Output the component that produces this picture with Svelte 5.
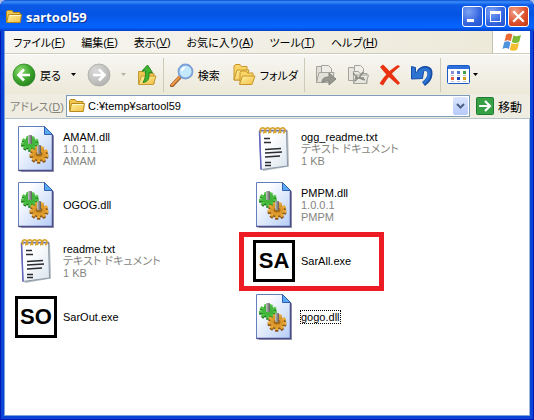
<script>
  const menus = [
    { label: 'ファイル', key: 'F' },
    { label: '編集', key: 'E' },
    { label: '表示', key: 'V' },
    { label: 'お気に入り', key: 'A' },
    { label: 'ツール', key: 'T' },
    { label: 'ヘルプ', key: 'H' }
  ]

  const files = [
    { name: 'AMAM.dll', type: 'dll', info: ['1.0.1.1', 'AMAM'] },
    { name: 'ogg_readme.txt', type: 'txt', info: ['テキスト ドキュメント', '1 KB'] },
    { name: 'OGOG.dll', type: 'dll', info: [] },
    { name: 'PMPM.dll', type: 'dll', info: ['1.0.0.1', 'PMPM'] },
    { name: 'readme.txt', type: 'txt', info: ['テキスト ドキュメント', '1 KB'] },
    { name: 'SarAll.exe', type: 'exe', badge: 'SA', info: [], marked: true },
    { name: 'SarOut.exe', type: 'exe', badge: 'SO', info: [] },
    { name: 'gogo.dll', type: 'dll', info: [], focused: true }
  ]

  let path = 'C:¥temp¥sartool59'
</script>

{#snippet folder(size)}
  <svg width={size} height={size} viewBox="0 0 16 16">
    <path d="M.5 13V2.500L1.500 1.500H6l1.500 2H14v3" fill="#f3c64e" stroke="#b88a1c" />
    <path d="M.8 13.500L2.500 5.500h13l-1.200 8z" fill="url(#gFolder)" stroke="#b88a1c" />
    <path d="M3.500 6.500h11" stroke="#fff8c8" />
  </svg>
{/snippet}

{#snippet caret()}
  <svg class="caret" width="5" height="3" viewBox="0 0 5 3"><path d="M0 0h5L2.500 3z" fill="currentColor" /></svg>
{/snippet}

<svg class="defs" width="0" height="0" aria-hidden="true">
  <defs>
    <linearGradient id="gFolder" x1="0" y1="0" x2="1" y2="1">
      <stop offset="0" stop-color="#fff3a0" /><stop offset="1" stop-color="#f2bd45" />
    </linearGradient>
    <radialGradient id="gGreen" cx=".35" cy=".3" r=".8">
      <stop offset="0" stop-color="#8fdc70" /><stop offset=".55" stop-color="#3ea72e" /><stop offset="1" stop-color="#237c1a" />
    </radialGradient>
    <radialGradient id="gGrey" cx=".35" cy=".3" r=".8">
      <stop offset="0" stop-color="#dadada" /><stop offset="1" stop-color="#b0b0ae" />
    </radialGradient>
    <linearGradient id="gPage" x1="0" y1="0" x2="1" y2="1">
      <stop offset=".2" stop-color="#ffffff" /><stop offset="1" stop-color="#b4ccf8" />
    </linearGradient>
    <linearGradient id="gNote" x1="0" y1="0" x2="1" y2="1">
      <stop offset=".3" stop-color="#ffffff" /><stop offset="1" stop-color="#d9e4ee" />
    </linearGradient>
    <linearGradient id="gPin" x1="0" y1="0" x2="1" y2="0">
      <stop offset="0" stop-color="#c4c4c4" /><stop offset="1" stop-color="#5c5c5c" />
    </linearGradient>
  </defs>
</svg>

<div class="window">
  <header class="titlebar">
    {@render folder(16)}
    <h1>sartool59</h1>
    <div class="controls">
      <button class="ctl" aria-label="最小化">
        <svg width="19" height="19" viewBox="0 0 19 19"><path d="M4 12h7v3H4z" fill="#fff" /></svg>
      </button>
      <button class="ctl" aria-label="最大化">
        <svg width="19" height="19" viewBox="0 0 19 19"><path d="M4 4h11v11H4zM5 7v7h9V7z" fill="#fff" fill-rule="evenodd" /></svg>
      </button>
      <button class="ctl close" aria-label="閉じる">
        <svg width="19" height="19" viewBox="0 0 19 19"><path d="M5 5l9 9M14 5l-9 9" stroke="#fff" stroke-width="2.2" stroke-linecap="square" /></svg>
      </button>
    </div>
  </header>

  <div class="client">
    <div class="menurow">
      <nav class="menus">
        {#each menus as m}
          <button class="menu">{m.label}(<u>{m.key}</u>)</button>
        {/each}
      </nav>
      <div class="flag">
        <svg width="20" height="20" viewBox="0 0 20 20">
          <path d="M4.2 2.5C6.400 1 8.400 1 10.400 2.600L8.800 9.300C6.800 7.800 4.600 7.900 2.500 9.200z" fill="#ea6a35" />
          <path d="M11.400 3.200C13.600 4.600 16 4.700 19 2.800L17.300 9.800C14.800 11.400 12 11.300 9.800 9.900z" fill="#7dbb36" />
          <path d="M2.200 10.300C4.300 9 6.500 9 8.500 10.400L6.900 17C4.900 15.500 2.700 15.600.5 16.900z" fill="#5093dd" />
          <path d="M9.500 11.100C11.700 12.500 14.100 12.500 17 10.800L15.300 17.500C12.800 19.200 10 19 7.800 17.700z" fill="#f4bf2c" />
        </svg>
      </div>
    </div>

    <div class="toolbar">
      <button class="tool">
        <svg width="24" height="24" viewBox="0 0 24 24">
          <circle cx="12" cy="12" r="11" fill="url(#gGreen)" stroke="#2b8a22" stroke-width=".8" />
          <path d="M18 12H7.500M12 6.500L6.500 12l5.500 5.500" fill="none" stroke="#fff" stroke-width="2.700" />
        </svg>
        <span>戻る</span>
      </button>
      <button class="drop" aria-label="戻る履歴">{@render caret()}</button>
      <button class="tool" aria-label="進む" disabled>
        <svg width="24" height="24" viewBox="0 0 24 24">
          <circle cx="12" cy="12" r="11" fill="url(#gGrey)" stroke="#a9a9a5" stroke-width=".8" />
          <path d="M6 12h10.500M12 6.500l5.500 5.500-5.500 5.500" fill="none" stroke="#fff" stroke-width="2.700" />
        </svg>
      </button>
      <button class="drop" aria-label="進む履歴" disabled>{@render caret()}</button>
      <button class="tool" aria-label="上へ">
        <svg width="20" height="24" viewBox="0 0 20 24">
          <path d="M1.500 21V8.500h5l1.500 2h9V21z" fill="#f0c650" stroke="#c29a34" />
          <path d="M1.500 21.500l3-8.500h14.500l-2.500 8.500z" fill="url(#gFolder)" stroke="#c29a34" />
          <path d="M6 19.500c5-.5 6.500-4 6-10h3.500L10.500 2 5 8h3.500c.5 5-.5 8-2.500 11.500z" fill="#3fb52f" stroke="#1d7f18" stroke-width=".9" />
        </svg>
      </button>
      <span class="sep"></span>
      <button class="tool">
        <svg width="24" height="24" viewBox="0 0 24 24">
          <path d="M10 14l-8 8.500" stroke="#9c5a2a" stroke-width="4" stroke-linecap="round" />
          <path d="M9.500 14l-7.500 8" stroke="#ef9b4a" stroke-width="2" stroke-linecap="round" />
          <circle cx="15.500" cy="8.500" r="7" fill="#c4e8fc" stroke="#7b9fd6" stroke-width="1.800" />
          <path d="M10.800 8.500a4.800 4.800 0 0 1 5-4.700c-1 2.200-2.500 3.800-5 4.700z" fill="#fff" />
        </svg>
        <span>検索</span>
      </button>
      <button class="tool folders">
        <svg width="24" height="24" viewBox="0 0 24 24">
          <path d="M2 17V3l1.500-1.500h4.500L9.500 3.500H15V17z" fill="#f8d566" stroke="#c8962a" />
          <path d="M2 17l3-10h12l-3 10z" fill="url(#gFolder)" stroke="#c8962a" />
          <path d="M8 21V9l1-1h5l1.500 2H21v4" fill="#f8d566" stroke="#c8962a" />
          <path d="M7.500 21.500l3-8.500H23l-3 8.500z" fill="url(#gFolder)" stroke="#c8962a" />
        </svg>
        <span>フォルダ</span>
      </button>
      <span class="sep"></span>
      <div class="group">
        <button class="tool" aria-label="移動先" disabled>
          <svg width="24" height="24" viewBox="0 0 24 24" fill="#e2e1d9" stroke="#a5a49c">
            <path d="M2.500 19V3.500h5l1 2h5V19z" />
            <path d="M7.500 15V2.500h7l3 3V15z" fill="#eeede7" />
            <path d="M2.500 19.500l2.500-10h15l-2 10z" />
            <path d="M8 19.500c0-4 2-5.500 7-5.500v-4l7 6-7 6v-4c-3 0-4 0-7 1.500z" fill="#97968f" stroke="#85847d" />
          </svg>
        </button>
        <button class="tool" aria-label="コピー先" disabled>
          <svg width="24" height="24" viewBox="0 0 24 24" fill="#e8e7df" stroke="#a5a49c">
            <path d="M2.500 17.500V4.500h5l1 2h5v11z" />
            <path d="M8.500 16.500v-14h6l3 3v11z" fill="#f0efe9" />
            <path d="M7.500 20.500v-12h5l1.500 2h7v10z" />
            <path d="M7.500 20.500l3-8.500h12l-2.500 8.500z" />
            <path d="M7 10l5 5-3 3M17 9l-4 6 6 2M9 15h9" fill="none" stroke="#8c8b84" stroke-width="1.400" />
          </svg>
        </button>
        <button class="tool" aria-label="削除">
          <svg width="24" height="24" viewBox="0 0 24 24">
            <path d="M2 4L5 1.500C9 5 15 12 22 20l-2 2C14 17 7 11 2 4z" fill="#e93212" />
            <path d="M20 2l2 1.500C16 8 10 14 5 22.500L1.500 20.500C7 12 13 6 20 2z" fill="#e93212" />
          </svg>
        </button>
        <button class="tool" aria-label="元に戻す">
          <svg width="24" height="24" viewBox="0 0 24 24">
            <path d="M9 9C13 3.500 20.500 4.500 20 11c-.3 4.500-3 7.500-6.500 10" fill="none" stroke="#174fa8" stroke-width="5" />
            <path d="M1.500 3.500l4 1v5L14 6l-1.500 9.500-11 .5z" fill="#2d74d2" stroke="#174fa8" />
            <path d="M9 9.500C13 4.500 19.500 5.500 19.200 11c-.3 4-2.700 7-5.700 9" fill="none" stroke="#2d74d2" stroke-width="3" />
          </svg>
        </button>
      </div>
      <span class="sep"></span>
      <button class="tool views" aria-label="表示">
        <svg width="24" height="20" viewBox="0 0 24 20">
          <rect x=".5" y=".5" width="22" height="18" rx="1" fill="#fff" stroke="#1d5bc4" />
          <path d="M1 1h21v3H1z" fill="#2d70dd" />
          <path d="M4 6h3v3H4z" fill="#8d8ce0" /><path d="M10 6h3v3h-3z" fill="#4a74d8" /><path d="M16 6h3v3h-3z" fill="#44a044" />
          <path d="M4 12h3v3H4z" fill="#e8603c" /><path d="M10 12h3v3h-3z" fill="#1c3fb0" /><path d="M16 12h3v3h-3z" fill="#d6a21c" />
          <path d="M4 10.500h3M10 10.500h3M16 10.500h3M4 16.500h3M10 16.500h3M16 16.500h3" stroke="#c4c4c4" />
        </svg>
        {@render caret()}
      </button>
    </div>

    <div class="address">
      <label for="path">アドレス(<u>D</u>)</label>
      <div class="combo">
        {@render folder(16)}
        <input id="path" type="text" bind:value={path} />
        <button class="open" aria-label="履歴">
          <svg width="9" height="6" viewBox="0 0 9 6"><path d="M1 1l3.500 3.500L8 1" fill="none" stroke="#4d6185" stroke-width="2" /></svg>
        </button>
      </div>
      <button class="go">
        <svg width="18" height="18" viewBox="0 0 18 18">
          <rect x=".5" y=".5" width="17" height="17" rx="1" fill="#36a045" stroke="#207a30" />
          <path d="M3 9h10M9 4l5 5-5 5" fill="none" stroke="#fff" stroke-width="2.200" />
        </svg>
        <span>移動</span>
      </button>
    </div>

    <main class="files">
      {#each files as file}
        <div class="file" class:marked={file.marked}>
          <div class="icon">
            {#if file.type === 'dll'}
              <svg width="36" height="48" viewBox="0 0 36 48">
                <path d="M3 3h25l8 8v36H3z" fill="#40406a" opacity=".5" />
                <path d="M.5 1.500h26l8 8v36H.5z" fill="url(#gPage)" stroke="#6380bd" />
                <path d="M.5 45.500h34V10" fill="none" stroke="#4c4c88" stroke-width="1.500" />
                <path d="M26.500 1.500v8h8z" fill="#59a9f5" stroke="#315fb0" />
                <g transform="translate(12 18) scale(1 .8)">
                  <circle cy="2" r="6.500" fill="#1f7a20" />
                  <circle cy="2" r="7.500" fill="none" stroke="#1f7a20" stroke-width="3" stroke-dasharray="3 2.236" />
                  <circle r="6.500" fill="#43b53c" />
                  <circle r="7.500" fill="none" stroke="#52c646" stroke-width="3" stroke-dasharray="3 2.236" />
                </g>
                <rect x="10" y="10" width="4" height="9" rx="1" fill="url(#gPin)" />
                <g transform="translate(21 29) scale(1 .85)">
                  <circle cy="2" r="7" fill="#8a5514" />
                  <circle cy="2" r="8" fill="none" stroke="#8a5514" stroke-width="3" stroke-dasharray="3.200 2.385" />
                  <circle r="7" fill="#dd9a2a" />
                  <circle r="8" fill="none" stroke="#e8a838" stroke-width="3" stroke-dasharray="3.200 2.385" />
                </g>
                <ellipse cx="21" cy="29" rx="3.500" ry="2.500" fill="#a36b1c" />
                <rect x="19" y="20" width="4" height="9" rx="1" fill="url(#gPin)" />
              </svg>
            {:else if file.type === 'txt'}
              <svg width="34" height="46" viewBox="0 0 34 46">
                <path d="M4 5.500l27-1 1 36L6 45z" fill="#6a7780" opacity=".5" />
                <path d="M2.500 5h27l1 35L4 43.500z" fill="url(#gNote)" stroke="#8d97a8" />
                <path d="M2.500 5l1.500 38.500" stroke="#6262c0" stroke-width="1.500" />
                <path d="M2 4.500h28" stroke="#7a74aa" stroke-width="1.500" />
                <g fill="none" stroke="#d5a530" stroke-width="1.700">
                  {#each [4, 9, 14, 19, 24] as x}
                    <path d="M{x} 7c-2-3 0-6 2.500-5s1.500 5-.5 5" />
                  {/each}
                </g>
                <path d="M7 12.500h6M7 16.500h7M8 23.500l16-1M8 27l17-1M8 31l15-1M8 36.500h6M8 39.500h6" stroke="#2b2b30" stroke-width="1.300" />
              </svg>
            {:else}
              <div class="exe">{file.badge}</div>
            {/if}
          </div>
          <div class="text">
            <span class="name" class:focused={file.focused}>{file.name}</span>
            {#each file.info as line}
              <span class="info">{line}</span>
            {/each}
          </div>
        </div>
      {/each}
    </main>
  </div>
</div>

<style>
  :global(body) {
    margin: 0;
    background: #a9bbe6;
  }

  .defs {
    position: absolute;
  }

  .window {
    display: flex;
    flex-direction: column;
    box-sizing: border-box;
    min-height: 100vh;
    padding: 0 4px 4px;
    border-radius: 7px 7px 0 0;
    background: #0a45d8;
    box-shadow: inset 1px -1px #0019b0, inset -1px 0 #0019b0;
    font-family: 'Liberation Sans', 'Noto Sans CJK JP', sans-serif;
    font-size: 11px;
    font-feature-settings: 'palt';
    color: #000;
  }

  svg {
    display: block;
    flex: none;
  }

  button {
    display: flex;
    align-items: center;
    margin: 0;
    padding: 0;
    border: 0;
    background: none;
    font: inherit;
    font-feature-settings: inherit;
    color: inherit;
    white-space: nowrap;
  }

  .titlebar {
    display: flex;
    align-items: center;
    gap: 4px;
    height: 31px;
    margin: 0 -4px;
    padding: 2px 5px 0 6px;
    box-sizing: border-box;
    border-radius: 7px 7px 0 0;
    background: linear-gradient(#0a4fd0 0, #3a8dfa 6%, #0c5be8 16%, #0453e2 45%, #0560f8 75%, #0663ff 88%, #0340c8 100%);
  }

  h1 {
    flex: 1;
    margin: 0;
    font: bold 13px/18px 'Noto Sans', sans-serif;
    color: #fff;
    text-shadow: 1px 1px #0a2f8c;
  }

  .controls {
    display: flex;
    gap: 2px;
  }

  .ctl {
    border: 1px solid #fff;
    border-radius: 3px;
    background: radial-gradient(circle at 30% 25%, #7ea4f4, #3264e0 60%, #2350cc);
  }

  .close {
    background: radial-gradient(circle at 30% 25%, #f0a088, #dd4c28 60%, #c03a18);
  }

  .client {
    display: flex;
    flex: 1;
    flex-direction: column;
    border-left: 1px solid #7ba2d8;
    background: #fff;
  }

  .menurow {
    display: flex;
    height: 22px;
    border-bottom: 1px solid #d0ccba;
    background: linear-gradient(90deg, #f6f5f1, #ece9d8);
  }

  .menus {
    display: flex;
    flex: 1;
    gap: 16px;
    padding-left: 8px;
  }

  .flag {
    display: flex;
    align-items: center;
    justify-content: center;
    width: 37px;
    border-left: 1px solid #c6c3b2;
    background: #fff;
  }

  .toolbar {
    display: flex;
    align-items: center;
    height: 39px;
    padding-left: 7px;
    border-top: 1px solid #fff;
    background: linear-gradient(#f7f6f2, #ece9d8);
  }

  .tool {
    gap: 4px;
  }

  .drop {
    justify-content: center;
    width: 26px;
    height: 24px;
  }

  .drop:disabled {
    color: #b5b3a8;
  }

  .sep {
    width: 1px;
    height: 34px;
    margin: 0 6px;
    background: #cdcab9;
  }

  .folders {
    margin-left: 12px;
  }

  .group {
    display: flex;
    gap: 8px;
    margin-left: 3px;
  }

  .views {
    gap: 2px;
  }

  .address {
    display: flex;
    align-items: center;
    height: 24px;
    padding: 0 8px 0 5px;
    border-bottom: 1px solid #b8c4cc;
    background: #efede2;
  }

  label {
    width: 56px;
    color: #85837a;
    white-space: nowrap;
  }

  .combo {
    display: flex;
    flex: 1;
    align-items: center;
    gap: 3px;
    min-width: 0;
    height: 22px;
    padding: 1px 1px 1px 2px;
    box-sizing: border-box;
    border: 1px solid #7f9db9;
    background: #fff;
  }

  input {
    flex: 1;
    min-width: 0;
    padding: 0;
    border: 0;
    outline: none;
    background: none;
    font: 11px/16px 'Liberation Sans', sans-serif;
    color: #000;
  }

  .open {
    justify-content: center;
    width: 15px;
    height: 18px;
    border-radius: 2px;
    background: linear-gradient(#dbe6fe, #b6cafa);
  }

  .go {
    gap: 4px;
    margin-left: 6px;
    font-size: 12px;
  }

  .files {
    display: grid;
    flex: 1;
    grid-template-columns: repeat(auto-fill, 238px);
    grid-auto-rows: 56px;
    align-content: start;
    padding: 2px 0 8px 7px;
    border-right: 1px solid #9db6dc;
    border-bottom: 1px solid #7ba2d8;
  }

  .file {
    position: relative;
    display: flex;
    align-items: center;
    gap: 3px;
  }

  /* callout frame round the program to start */
  .marked::after {
    content: '';
    position: absolute;
    top: -1px;
    left: -11px;
    width: 135px;
    height: 49px;
    border: 5px solid #ed1c24;
  }

  .icon {
    display: flex;
    justify-content: center;
    width: 48px;
  }

  .exe {
    width: 36px;
    border: 3px solid #000;
    background: #fff;
    font: bold 22px/36px 'Liberation Sans', sans-serif;
    text-align: center;
  }

  .text {
    display: flex;
    flex-direction: column;
    align-items: flex-start;
    line-height: 12px;
    white-space: nowrap;
  }

  .focused {
    outline: 1px dotted #000;
  }

  .info {
    color: #85857f;
  }
</style>
